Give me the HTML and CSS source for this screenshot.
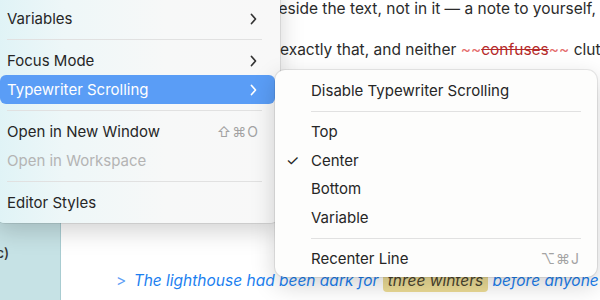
FILE: index.html
```html
<!DOCTYPE html>
<html>
<head>
    <title>Editor</title>
    <link rel="stylesheet" href="styles.css">
</head>
<body>
    <div class="app">
        <aside class="sidebar">
            <div class="sidebar-item">c)</div>
        </aside>
        <main class="editor">
            <p class="line line-one">beside the text, not in it — a note to yourself, nothing more</p>
            <p class="line line-two">exactly that, and neither <span class="del"><span class="mark">~~</span><s>confuses</s><span class="mark">~~</span></span> clutters the page</p>
            <p class="quote"><span class="quote-mark">&gt;</span> <em>The lighthouse had been dark for <span class="hl">three winters</span> before anyone noticed</em></p>
        </main>
    </div>

    <div class="menu main-menu">
        <div class="item">Variables <svg class="chev" viewBox="0 0 7 12"><path d="M1.5 1.5 L5.5 6 L1.5 10.5"/></svg></div>
        <div class="sep"></div>
        <div class="item">Focus Mode <svg class="chev" viewBox="0 0 7 12"><path d="M1.5 1.5 L5.5 6 L1.5 10.5"/></svg></div>
        <div class="item active">Typewriter Scrolling <svg class="chev" viewBox="0 0 7 12"><path d="M1.5 1.5 L5.5 6 L1.5 10.5"/></svg></div>
        <div class="sep"></div>
        <div class="item">Open in New Window <span class="key">⇧⌘O</span></div>
        <div class="item disabled">Open in Workspace</div>
        <div class="sep"></div>
        <div class="item">Editor Styles</div>
    </div>

    <div class="menu sub-menu">
        <div class="item">Disable Typewriter Scrolling</div>
        <div class="sep"></div>
        <div class="item">Top</div>
        <div class="item"><span class="check">✓</span>Center</div>
        <div class="item">Bottom</div>
        <div class="item">Variable</div>
        <div class="sep"></div>
        <div class="item">Recenter Line <span class="key">⌥⌘J</span></div>
    </div>
</body>
</html>
```

FILE: styles.css
```css
* {
    margin: 0;
    padding: 0;
    box-sizing: border-box;
}

body {
    width: 600px;
    height: 300px;
    overflow: hidden;
    position: relative;
    background: #fff;
    font-family: 'Inter', 'Noto Sans', sans-serif;
    color: #262626;
}

.app {
    display: flex;
    height: 300px;
}

.sidebar {
    width: 61px;
    background: #c6e2e5;
    border-right: 1px solid #a8ccd1;
    padding-top: 244px;
}

.sidebar-item {
    font-size: 14px;
    font-weight: 500;
    color: #333;
    margin-left: -4px;
}

.editor {
    flex: 1;
    padding-left: 55px;
    overflow: hidden;
    font-size: 15.5px;
    color: #2b2b2b;
}

.line {
    white-space: nowrap;
    height: 41px;
    line-height: 18px;
}

.line-one {
    margin-top: 0;
    padding-left: 153px;
}

.line-two {
    padding-left: 164px;
}

.del {
    color: #e46c6c;
}

.del s {
    color: #b52a2a;
}

.quote {
    white-space: nowrap;
    margin-top: 189px;
    color: #1c7ff0;
}

.quote-mark {
    color: #5fa0f5;
    margin-right: 3px;
}

.hl {
    background: #ecdc96;
    color: #4a4430;
    border-radius: 4px;
    padding: 2px 5px;
}

/* menus */
.menu {
    position: absolute;
    font-size: 15px;
    border-radius: 10px;
    padding: 5px;
    box-shadow: 0 8px 24px rgba(0, 0, 0, 0.18), 0 0 0 1px rgba(0, 0, 0, 0.08);
}

.main-menu {
    left: -5px;
    top: -20px;
    width: 285px;
    padding-top: 24px;
    padding-bottom: 6px;
    background: linear-gradient(90deg, #dff3f6 0, #eef7f8 70px, #f7f8f8 170px, #f8f8f8);
}

.sub-menu {
    left: 275px;
    top: 70px;
    width: 322px;
    height: 207px;
    padding-top: 6px;
    background: #fdfdfc;
}

.item {
    display: flex;
    align-items: center;
    justify-content: space-between;
    height: 29px;
    padding: 0 18px 0 7px;
    border-radius: 6px;
    white-space: nowrap;
}

.sub-menu .item {
    position: relative;
    height: 28.5px;
    padding-left: 31px;
    padding-right: 14px;
}

.item.active {
    background: #5a9df6;
    color: #fff;
}

.item.disabled {
    color: #b4b4b4;
}

.chev {
    width: 7px;
    height: 12px;
    fill: none;
    stroke: #333;
    stroke-width: 1.7;
    stroke-linecap: round;
    stroke-linejoin: round;
}

.active .chev {
    stroke: #fff;
}

.key {
    color: #a3a3a3;
    letter-spacing: 1px;
    font-size: 14px;
    margin-right: -2px;
}

.check {
    position: absolute;
    left: 6px;
    font-size: 15px;
}

.sep {
    height: 1px;
    background: #e1e1e1;
    margin: 6px 13px 6px 7px;
}

.sub-menu .sep {
    margin: 6px 11px 6px 31px;
}
```
